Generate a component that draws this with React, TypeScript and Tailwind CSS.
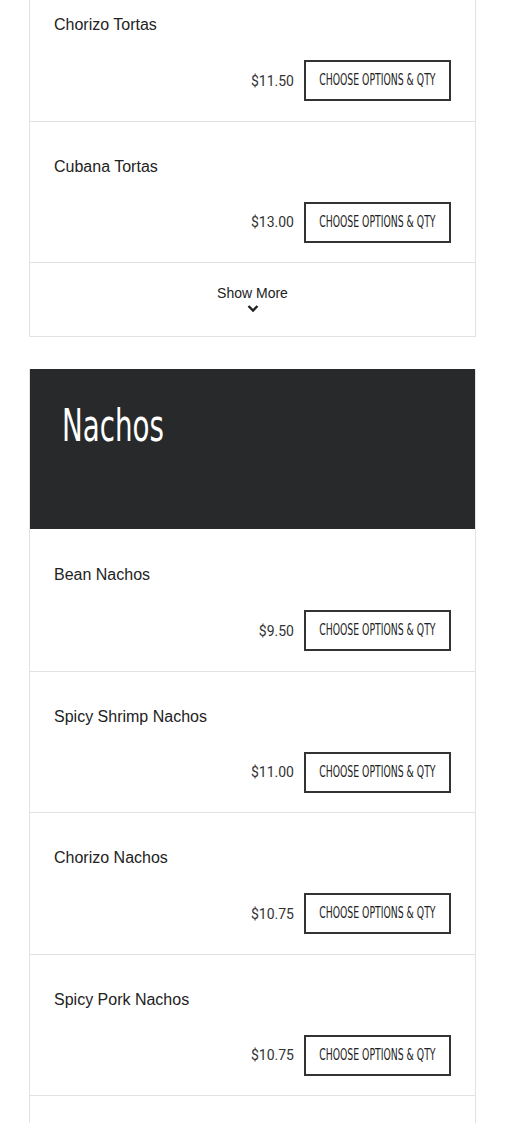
import React from "react";

interface Item {
  name: string;
  price: string;
}

const tortas: Item[] = [
  { name: "Chorizo Tortas", price: "$11.50" },
  { name: "Cubana Tortas", price: "$13.00" },
];

const nachos: Item[] = [
  { name: "Bean Nachos", price: "$9.50" },
  { name: "Spicy Shrimp Nachos", price: "$11.00" },
  { name: "Chorizo Nachos", price: "$10.75" },
  { name: "Spicy Pork Nachos", price: "$10.75" },
  { name: "Pork Nachos", price: "$10.75" },
];

const MenuRow: React.FC<{ item: Item }> = ({ item }) => (
  <div className="border-b border-[#e2e2e2] px-6 pt-[33px] pb-[19.5px]">
    <div className="text-base leading-6 text-[#222] font-['Liberation_Sans',sans-serif]">
      {item.name}
    </div>
    <div className="mt-[23px] flex items-center justify-end gap-[10px]">
      <span className="text-sm text-[#333] font-['Roboto',sans-serif]">{item.price}</span>
      <button className="flex h-[41px] w-[147px] items-center justify-center overflow-hidden border-2 border-[#333] bg-white text-[#222]">
        <span className="inline-block scale-x-[0.69] whitespace-nowrap text-[15px] font-medium uppercase font-['DejaVu_Sans_Condensed',sans-serif]">
          Choose Options &amp; Qty
        </span>
      </button>
    </div>
  </div>
);

const App: React.FC = () => {
  return (
    <div className="min-h-[1123px] bg-white px-[29px]">
      <div className="-mt-[20px] border-x border-b border-[#e2e2e2]">
        {tortas.map((item) => (
          <MenuRow key={item.name} item={item} />
        ))}
        <div className="flex flex-col items-center pt-5 pb-[23px]">
          <span className="text-sm leading-5 text-[#222] font-['Liberation_Sans',sans-serif]">
            Show More
          </span>
          <svg width="12" height="9" viewBox="0 0 12 9" className="mt-[1px]">
            <polyline
              points="1.5,2 6,6.5 10.5,2"
              fill="none"
              stroke="#222"
              strokeWidth="2.4"
            />
          </svg>
        </div>
      </div>

      <div className="mt-8 border-x border-[#e2e2e2]">
        <div className="h-[160px] bg-[#28292b] px-8 pt-[29px]">
          <h2 className="inline-block origin-left scale-x-[0.7] text-[44px] leading-[56px] text-white font-['DejaVu_Sans_Condensed',sans-serif]">
            Nachos
          </h2>
        </div>
        <div className="pt-px">
          {nachos.map((item) => (
            <MenuRow key={item.name} item={item} />
          ))}
        </div>
      </div>
    </div>
  );
};

export default App;
